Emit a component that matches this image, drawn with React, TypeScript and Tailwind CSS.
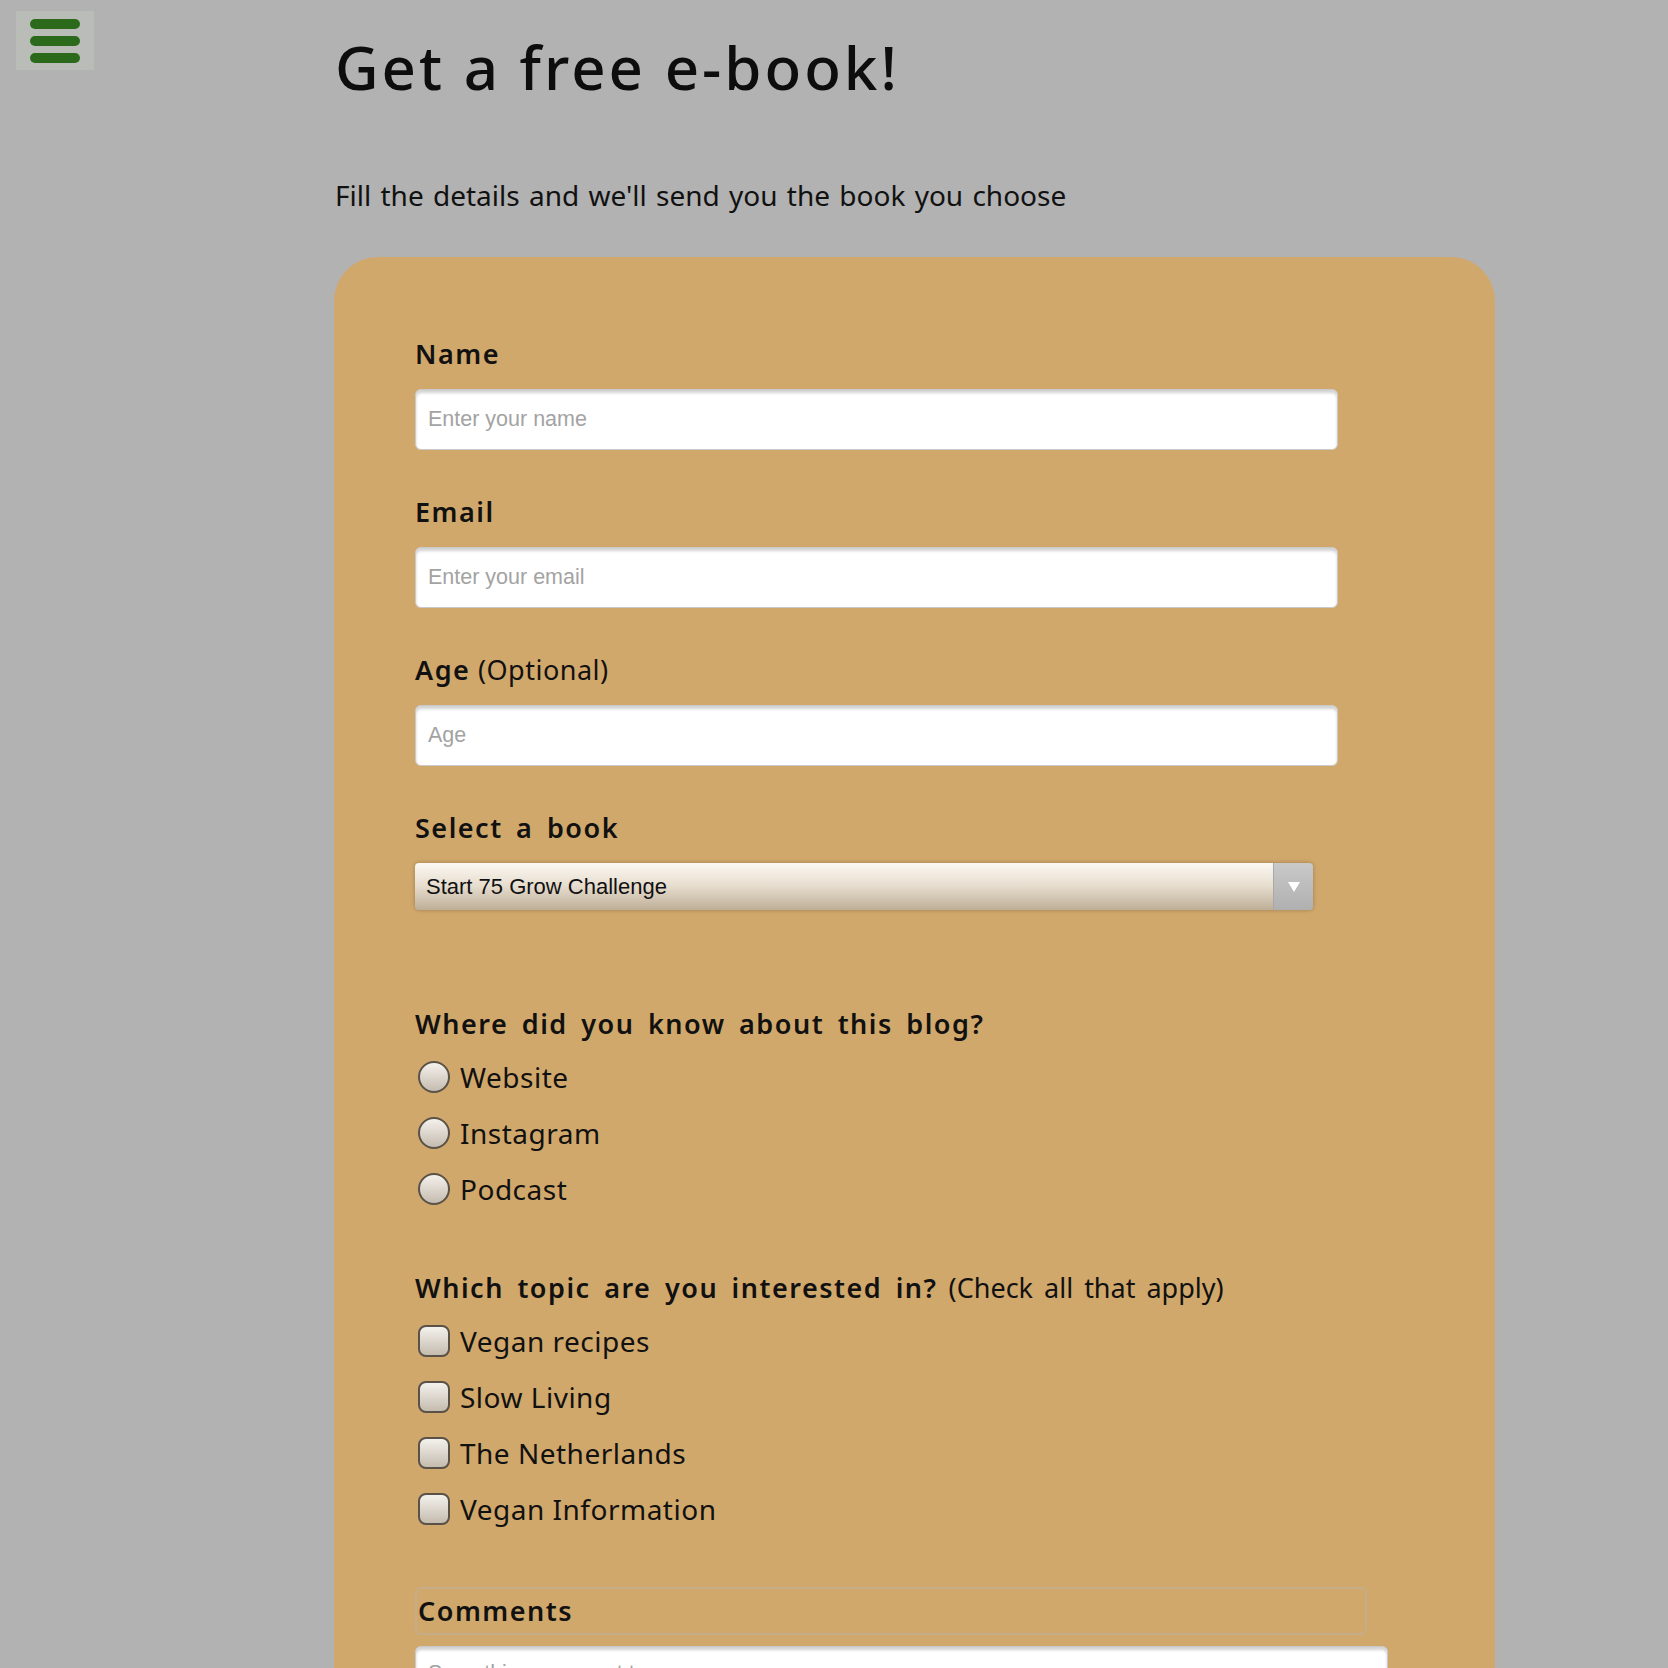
import { useState } from "react"

const sources = ["Website", "Instagram", "Podcast"]
const topics = ["Vegan recipes", "Slow Living", "The Netherlands", "Vegan Information"]

const font = { fontFamily: '"Noto Sans", "Open Sans", sans-serif' }
const formFont = { fontFamily: '"Liberation Sans", Arial, sans-serif' }

function Field({ label, extra, placeholder, type = "text" }: { label: string; extra?: string; placeholder: string; type?: string }) {
  return (
    <div className="flex flex-col">
      <label className="text-[27px] leading-[36px] text-[#111]">
        <span className="font-semibold tracking-[1.5px] [word-spacing:5px]">{label}</span>
        {extra && <span className="tracking-[0.5px]"> {extra}</span>}
      </label>
      <input
        type={type}
        placeholder={placeholder}
        className="mt-[17px] h-[61px] w-[923px] rounded-[6px] border border-[#c9c9c9] bg-white px-[12px] text-[21.5px] text-[#333] shadow-[inset_0_3px_3px_rgba(0,0,0,0.18)] outline-none placeholder:text-[#a3a3a3]"
        style={formFont}
      />
    </div>
  )
}

export default function App() {
  const [book, setBook] = useState("start75")

  return (
    <div className="min-h-screen bg-[#b2b2b2] text-[#111]" style={font}>
      <button className="fixed left-[16px] top-[11px] flex h-[59px] w-[78px] flex-col items-center justify-center gap-[7px] bg-[#babdb7]">
        <span className="h-[10px] w-[50px] rounded-full bg-[#2b6a1b]"></span>
        <span className="h-[10px] w-[50px] rounded-full bg-[#2b6a1b]"></span>
        <span className="h-[10px] w-[50px] rounded-full bg-[#2b6a1b]"></span>
      </button>

      <main className="ml-[334px] w-[1161px] pt-[27px]">
        <h1 className="pl-[1px] text-[60px] font-medium leading-[80px] tracking-[3px] text-[#0d0d0d]">Get a free e-book!</h1>
        <p className="mt-[70px] pl-[1px] text-[28px] leading-[36px] [word-spacing:2px]">Fill the details and we'll send you the book you choose</p>

        <form className="mt-[44px] rounded-t-[44px] bg-[#d1a86b] pb-[40px] pl-[81px] pt-[79px]">
          <div className="flex flex-col gap-[44px]">
            <Field label="Name" placeholder="Enter your name" />
            <Field label="Email" placeholder="Enter your email" type="email" />
            <Field label="Age" extra="(Optional)" placeholder="Age" type="number" />

            <div className="flex flex-col">
              <label className="text-[27px] font-semibold leading-[36px] tracking-[1.5px] [word-spacing:5px]">Select a book</label>
              <div className="mt-[17px] flex h-[47px] w-[898px] overflow-hidden rounded-[4px] shadow-[0_0_4px_rgba(0,0,0,0.25)]">
                <select
                  value={book}
                  onChange={(e) => setBook(e.target.value)}
                  className="flex-1 appearance-none bg-gradient-to-b from-[#fbf8f3] via-[#e6dccd] to-[#beae98] px-[11px] text-[22px] text-[#111] outline-none"
                  style={formFont}
                >
                  <option value="start75">Start 75 Grow Challenge</option>
                  <option value="vegan">Vegan Basics</option>
                </select>
                <div className="flex w-[40px] items-center justify-center border-l border-[#a9a9a9] bg-gradient-to-b from-[#c9c9c9] to-[#b0b0b0]">
                  <svg width="14" height="12" viewBox="0 0 14 12">
                    <path d="M1 1h12L7 11z" fill="#fff" />
                  </svg>
                </div>
              </div>
            </div>
          </div>

          <fieldset className="mt-[96px]">
            <legend className="text-[27px] font-semibold leading-[36px] tracking-[1.5px] [word-spacing:5px]">Where did you know about this blog?</legend>
            <div className="mt-[17px] flex flex-col gap-[20px]">
              {sources.map((s) => (
                <label key={s} className="flex items-center gap-[10px] text-[28px] leading-[36px] tracking-[0.5px]">
                  <input
                    type="radio"
                    name="source"
                    className="ml-[3px] h-[32px] w-[32px] appearance-none rounded-full border-[2px] border-[#5a5147] bg-gradient-to-b from-[#f4f1ec] to-[#c5bcaf]"
                  />
                  {s}
                </label>
              ))}
            </div>
          </fieldset>

          <fieldset className="mt-[63px]">
            <legend className="text-[27px] leading-[36px]">
              <span className="font-semibold tracking-[1.5px] [word-spacing:5px]">Which topic are you interested in?</span>
              <span className="[word-spacing:4px]"> (Check all that apply)</span>
            </legend>
            <div className="mt-[17px] flex flex-col gap-[20px]">
              {topics.map((t) => (
                <label key={t} className="flex items-center gap-[10px] text-[28px] leading-[36px] tracking-[0.5px]">
                  <input
                    type="checkbox"
                    className="ml-[3px] h-[32px] w-[32px] appearance-none rounded-[8px] border-[2px] border-[#5a5147] bg-gradient-to-b from-[#f4f1ec] to-[#c5bcaf]"
                  />
                  {t}
                </label>
              ))}
            </div>
          </fieldset>

          <div className="mt-[60px] flex flex-col">
            <div className="flex h-[48px] w-[952px] items-center rounded-[6px] border-[2px] border-[#c5ad8a] pl-[1px]">
              <span className="text-[27px] font-semibold tracking-[1.5px]">Comments</span>
            </div>
            <textarea
              placeholder="Something you want to say"
              className="mt-[11px] h-[140px] w-[973px] rounded-[6px] border border-[#c9c9c9] bg-white px-[12px] py-[10px] text-[21.5px] shadow-[inset_0_3px_3px_rgba(0,0,0,0.18)] outline-none placeholder:text-[#a3a3a3]"
              style={formFont}
            />
          </div>
        </form>
      </main>
    </div>
  )
}
